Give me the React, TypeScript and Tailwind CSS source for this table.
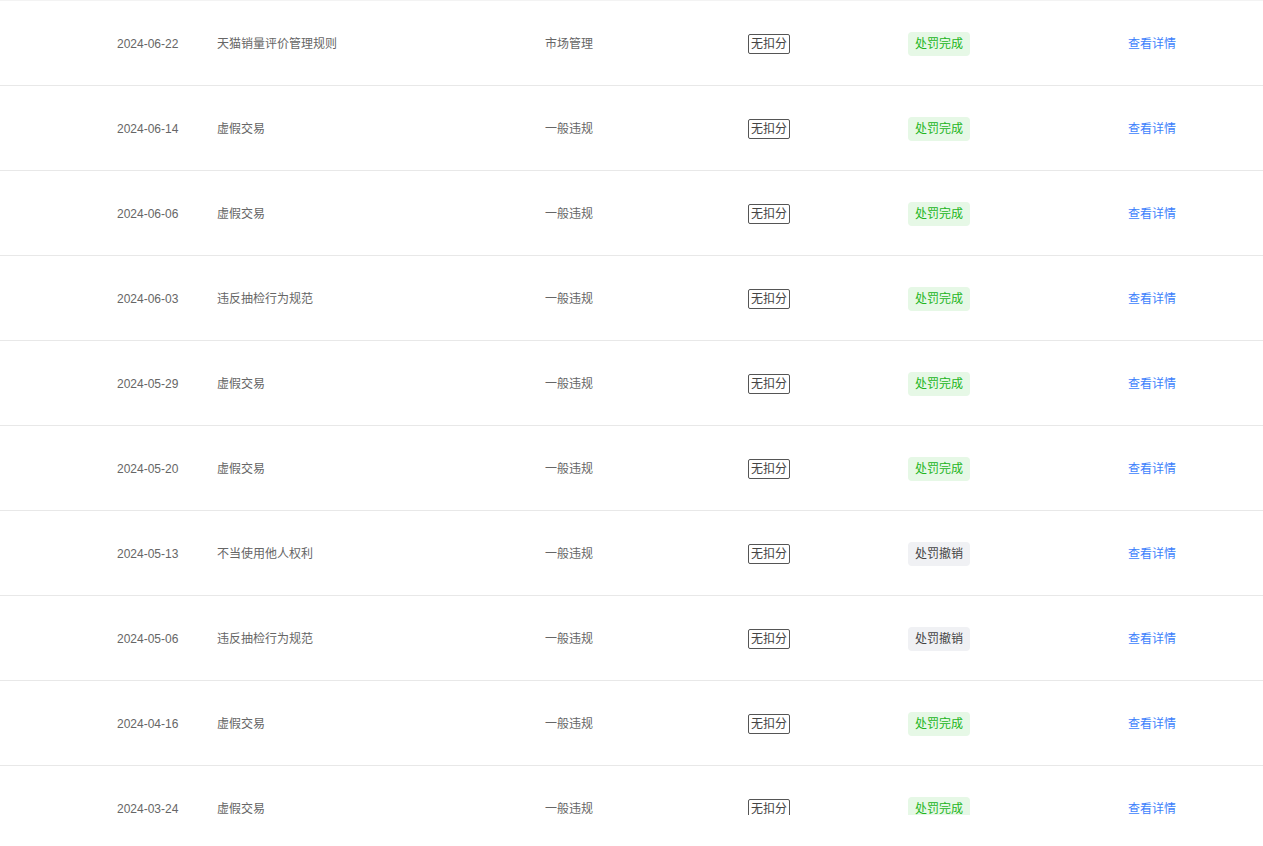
import React from 'react';

type Status = 'done' | 'revoked';

interface Record {
  date: string;
  title: string;
  category: string;
  status: Status;
}

const records: Record[] = [
  { date: '2024-06-22', title: '天猫销量评价管理规则', category: '市场管理', status: 'done' },
  { date: '2024-06-14', title: '虚假交易', category: '一般违规', status: 'done' },
  { date: '2024-06-06', title: '虚假交易', category: '一般违规', status: 'done' },
  { date: '2024-06-03', title: '违反抽检行为规范', category: '一般违规', status: 'done' },
  { date: '2024-05-29', title: '虚假交易', category: '一般违规', status: 'done' },
  { date: '2024-05-20', title: '虚假交易', category: '一般违规', status: 'done' },
  { date: '2024-05-13', title: '不当使用他人权利', category: '一般违规', status: 'revoked' },
  { date: '2024-05-06', title: '违反抽检行为规范', category: '一般违规', status: 'revoked' },
  { date: '2024-04-16', title: '虚假交易', category: '一般违规', status: 'done' },
  { date: '2024-03-24', title: '虚假交易', category: '一般违规', status: 'done' },
];

const StatusBadge: React.FC<{ status: Status }> = ({ status }) =>
  status === 'done' ? (
    <span className="inline-flex h-[24px] items-center rounded-[4px] bg-[#e6f8e6] px-[7px] text-[12px] text-[#22b522]">
      处罚完成
    </span>
  ) : (
    <span className="inline-flex h-[24px] items-center rounded-[4px] bg-[#f0f1f4] px-[7px] text-[12px] text-[#444444]">
      处罚撤销
    </span>
  );

const RecordRow: React.FC<{ record: Record }> = ({ record }) => (
  <div className="grid h-[85px] grid-cols-[100px_328px_203px_160px_220px_1fr] items-center border-b border-[#e8e8e8] pl-[117px] pt-[2px] text-[12px] text-[#666666]">
    <span>{record.date}</span>
    <span>{record.title}</span>
    <span>{record.category}</span>
    <div>
      <span className="inline-flex h-[20px] items-center rounded-[2px] border border-[#555555] px-[2px] text-[12px] text-[#444444]">
        无扣分
      </span>
    </div>
    <div>
      <StatusBadge status={record.status} />
    </div>
    <a className="cursor-pointer text-[#3d7ffc]">查看详情</a>
  </div>
);

const App: React.FC = () => {
  return (
    <div
      className="h-[815px] w-[1263px] overflow-hidden border-t border-[#f3f3f3] bg-white"
      style={{ fontFamily: '"Liberation Sans", "Noto Sans CJK SC", sans-serif' }}
    >
      {records.map((r) => (
        <RecordRow key={r.date + r.title} record={r} />
      ))}
    </div>
  );
};

export default App;
